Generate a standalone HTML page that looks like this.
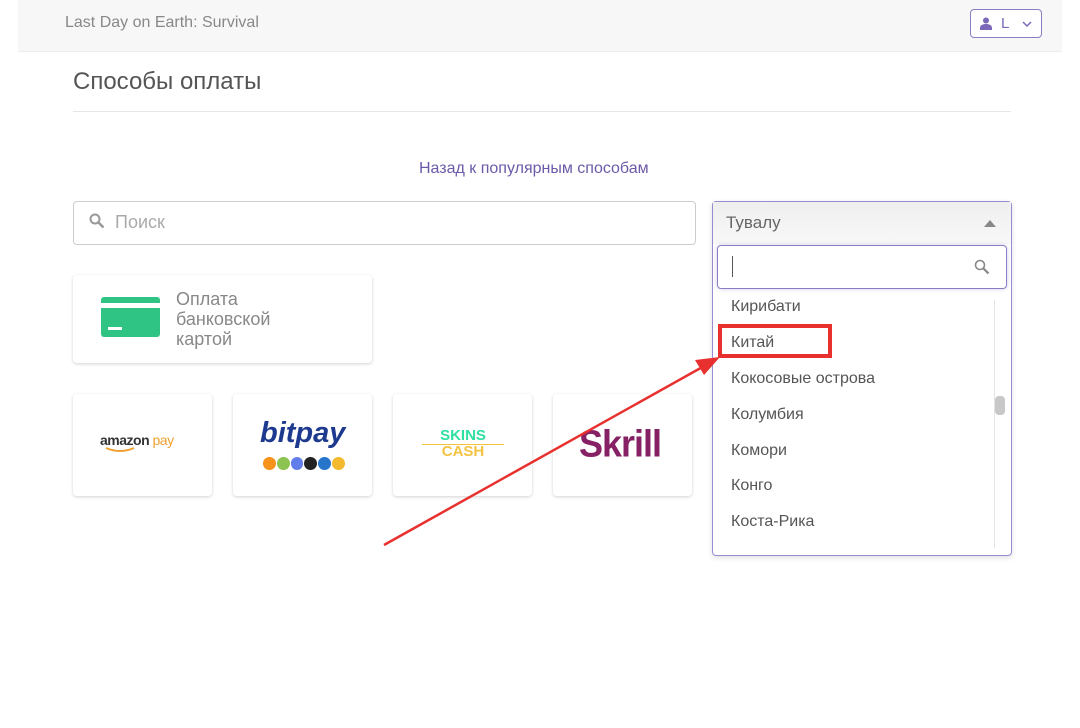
<!DOCTYPE html>
<html><head><meta charset="utf-8"><style>
*{box-sizing:border-box;margin:0;padding:0}
body{width:1080px;height:728px;background:#fff;font-family:"Liberation Sans",sans-serif;position:relative;overflow:hidden;color:#555}
.abs{position:absolute}
.card{position:absolute;background:#fff;border-radius:4px;box-shadow:0 1px 3px rgba(0,0,0,.18)}
.item{position:absolute;left:18px;font-size:16px;color:#555}
</style></head><body>
<div class="abs" style="left:18px;top:0;width:1044px;height:52px;background:#f7f7f7;border-bottom:1px solid #ececec"></div>
<div class="abs" style="left:65px;top:14px;font-size:16px;color:#888">Last Day on Earth: Survival</div>
<div class="abs" style="left:970px;top:9px;width:72px;height:29px;border:1px solid #8d7cc4;border-radius:4px;background:#fff;font-size:15px;color:#7b68b8">
<svg class="abs" style="left:9px;top:7px" width="12" height="13" viewBox="0 0 12 13"><circle cx="6" cy="3.5" r="3" fill="#7b68b8"/><path d="M0 13v-2c0-3 3-4 6-4s6 1 6 4v2z" fill="#7b68b8"/></svg>
<span class="abs" style="left:30px;top:5px">L</span>
<svg class="abs" style="left:51px;top:10px" width="10" height="8" viewBox="0 0 10 8"><path d="M1 2l4 4 4-4" stroke="#7b68b8" stroke-width="1.5" fill="none"/></svg>
</div>
<div class="abs" style="left:73px;top:68px;font-size:24px;color:#555">Способы оплаты</div>
<div class="abs" style="left:73px;top:111px;width:938px;height:1px;background:#e6e6e6"></div>
<div class="abs" style="left:419px;top:160px;font-size:16px;color:#6c5aa8">Назад к популярным способам</div>
<div class="abs" style="left:73px;top:201px;width:623px;height:44px;border:1px solid #ccc;border-radius:4px"></div>
<svg class="abs" style="left:89px;top:213px" width="16" height="16" viewBox="0 0 16 16"><circle cx="6" cy="6" r="4.5" stroke="#999" stroke-width="2" fill="none"/><path d="M9.5 9.5l5 5" stroke="#999" stroke-width="2.5"/></svg>
<div class="abs" style="left:115px;top:212px;font-size:18px;color:#aaa">Поиск</div>
<div class="card" style="left:73px;top:275px;width:299px;height:88px"></div>
<div class="abs" style="left:101px;top:297px;width:59px;height:40px;background:#2fc384;border-radius:3px"></div>
<div class="abs" style="left:101px;top:303px;width:59px;height:5px;background:#fff"></div>
<div class="abs" style="left:108px;top:327px;width:14px;height:3px;background:#fff"></div>
<div class="abs" style="left:176px;top:289px;font-size:18px;line-height:20px;color:#888">Оплата<br>банковской<br>картой</div>
<div class="card" style="left:73px;top:394px;width:139px;height:102px"></div>
<div class="abs" style="left:100px;top:432px;font-size:14px;font-weight:bold;color:#333;letter-spacing:-.5px">amazon <span style="color:#f0a030;font-weight:normal">pay</span></div>
<svg class="abs" style="left:105px;top:447px" width="30" height="6"><path d="M1 1q14 6 28 0" stroke="#f0a030" stroke-width="2" fill="none"/></svg>
<div class="card" style="left:233px;top:394px;width:139px;height:102px"></div>
<div class="abs" style="left:260px;top:417px;font-size:29px;font-weight:bold;font-style:italic;color:#1d3a8f">bitpay</div>
<div class="abs" style="left:263px;top:457px;width:82px;height:14px;display:flex;gap:1px">
<i style="width:13px;height:13px;border-radius:50%;background:#f7931a"></i><i style="width:13px;height:13px;border-radius:50%;background:#8dc351"></i><i style="width:13px;height:13px;border-radius:50%;background:#627eea"></i><i style="width:13px;height:13px;border-radius:50%;background:#222"></i><i style="width:13px;height:13px;border-radius:50%;background:#2775ca"></i><i style="width:13px;height:13px;border-radius:50%;background:#f3ba2f"></i></div>
<div class="card" style="left:393px;top:394px;width:139px;height:102px"></div>
<div class="abs" style="left:422px;top:428px;width:82px;text-align:center;font-size:15px;font-weight:bold;line-height:16px;color:#2ee0a0">SKINS<br><span style="color:#f5c342">CASH</span></div>
<div class="abs" style="left:422px;top:444px;width:82px;height:1px;background:#f5c342"></div>
<div class="card" style="left:553px;top:394px;width:139px;height:102px"></div>
<div class="abs" style="left:579px;top:423px;font-size:36px;font-weight:bold;color:#862165;letter-spacing:-1px;transform:scaleY(1.05)">Skrill</div>
<div class="abs" style="left:712px;top:201px;width:300px;height:355px;border:1px solid #9a8ad0;border-radius:4px;background:#fff;box-shadow:0 2px 6px rgba(0,0,0,.12)">
<div class="abs" style="left:0;top:0;width:298px;height:42px;background:linear-gradient(#efefef,#f8f8f8)"></div>
<div class="abs" style="left:13px;top:11px;font-size:17px;color:#666">Тувалу</div>
<div class="abs" style="left:271px;top:18px;width:0;height:0;border-left:6px solid transparent;border-right:6px solid transparent;border-bottom:7px solid #888"></div>
<div class="abs" style="left:4px;top:43px;width:290px;height:44px;border:1px solid #8d7cc4;border-radius:4px;background:#fff;box-shadow:0 0 4px rgba(141,124,196,.4)"></div>
<div class="abs" style="left:19px;top:54px;width:1px;height:21px;background:#555"></div>
<svg class="abs" style="left:261px;top:57px" width="16" height="16" viewBox="0 0 16 16"><circle cx="6" cy="6" r="4.5" stroke="#888" stroke-width="1.6" fill="none"/><path d="M9.5 9.5l5 5" stroke="#888" stroke-width="2.2"/></svg>
<div class="item" style="top:96px">Кирибати</div>
<div class="item" style="top:132px">Китай</div>
<div class="item" style="top:168px">Кокосовые острова</div>
<div class="item" style="top:204px">Колумбия</div>
<div class="item" style="top:240px">Комори</div>
<div class="item" style="top:275px">Конго</div>
<div class="item" style="top:311px">Коста-Рика</div>
<div class="abs" style="left:281px;top:98px;width:1px;height:248px;background:#e4e4e4"></div>
<div class="abs" style="left:282px;top:194px;width:10px;height:19px;background:#c8c8c8;border-radius:4px"></div>
</div>
<div class="abs" style="left:718px;top:324px;width:114px;height:34px;border:4px solid #e8312f"></div>
<svg class="abs" style="left:0;top:0" width="1080" height="728"><path d="M384 545L706 365" stroke="#e8312f" stroke-width="2.5"/><path d="M720 357L695 360L704 375Z" fill="#e8312f"/></svg>
</body></html>
